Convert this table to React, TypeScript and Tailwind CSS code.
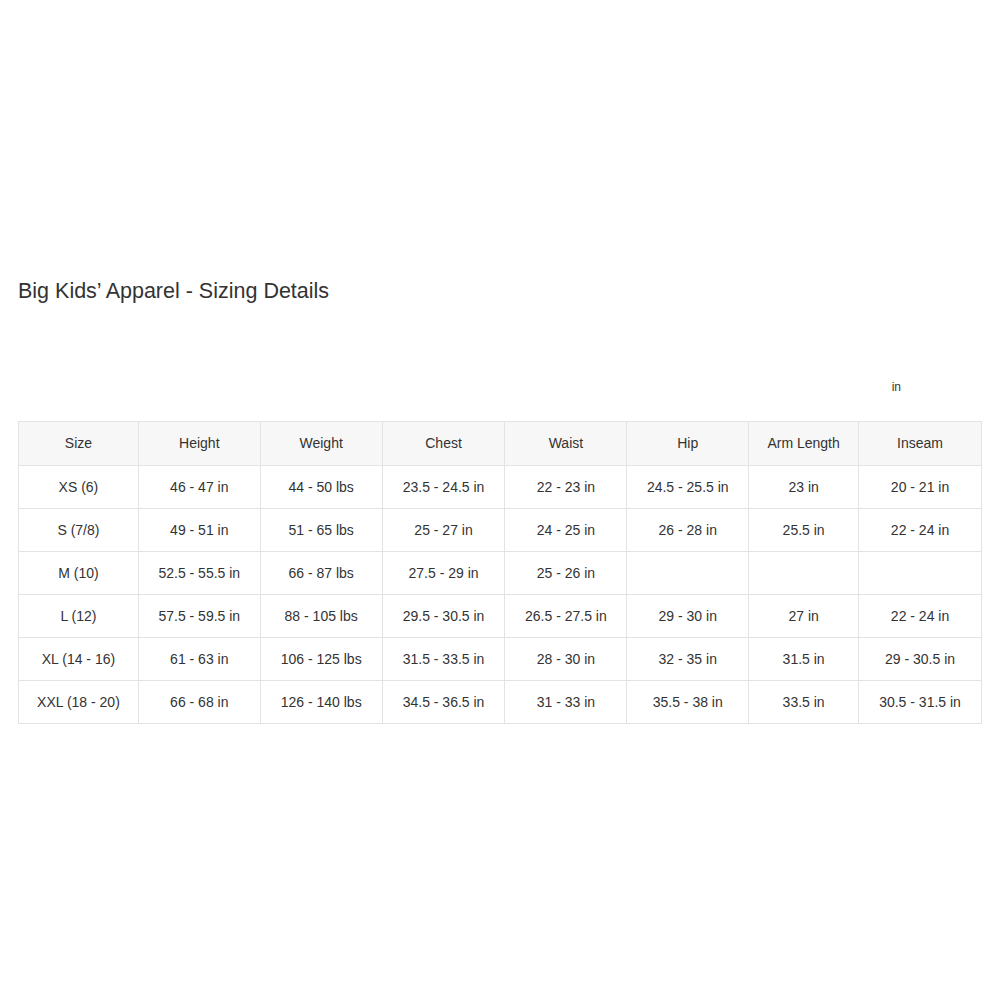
const COLS = ["Size", "Height", "Weight", "Chest", "Waist", "Hip", "Arm Length", "Inseam"];
const WIDTHS = ["w-[120px]", "w-[122px]", "w-[122px]", "w-[123px]", "w-[122px]", "w-[122px]", "w-[110px]", "w-[123px]"];

const ROWS: string[][] = [
  ["XS (6)", "46 - 47 in", "44 - 50 lbs", "23.5 - 24.5 in", "22 - 23 in", "24.5 - 25.5 in", "23 in", "20 - 21 in"],
  ["S (7/8)", "49 - 51 in", "51 - 65 lbs", "25 - 27 in", "24 - 25 in", "26 - 28 in", "25.5 in", "22 - 24 in"],
  ["M (10)", "52.5 - 55.5 in", "66 - 87 lbs", "27.5 - 29 in", "25 - 26 in", "", "", ""],
  ["L (12)", "57.5 - 59.5 in", "88 - 105 lbs", "29.5 - 30.5 in", "26.5 - 27.5 in", "29 - 30 in", "27 in", "22 - 24 in"],
  ["XL (14 - 16)", "61 - 63 in", "106 - 125 lbs", "31.5 - 33.5 in", "28 - 30 in", "32 - 35 in", "31.5 in", "29 - 30.5 in"],
  ["XXL (18 - 20)", "66 - 68 in", "126 - 140 lbs", "34.5 - 36.5 in", "31 - 33 in", "35.5 - 38 in", "33.5 in", "30.5 - 31.5 in"],
];

export default function App() {
  return (
    <div className="w-[1000px] h-[1000px] bg-white text-[#333] font-['Liberation_Sans',Arial,sans-serif]">
      <div className="pt-[277px] px-[18px]">
        <h1 className="text-[21.5px] leading-[28px] font-normal">Big Kids’ Apparel - Sizing Details</h1>
        <div className="mt-[74px] flex justify-end pr-[81px] text-[12px] leading-[16px]">in</div>
        <table className="mt-[26px] table-fixed border-collapse text-[14px] text-center">
          <thead>
            <tr className="bg-[#f7f7f7]">
              {COLS.map((c, i) => (
                <th key={c} className={`${WIDTHS[i]} h-[44px] border border-[#e3e3e3] font-normal p-0`}>
                  {c}
                </th>
              ))}
            </tr>
          </thead>
          <tbody>
            {ROWS.map((row) => (
              <tr key={row[0]}>
                {row.map((cell, i) => (
                  <td key={i} className="h-[43px] border border-[#e3e3e3] p-0">
                    {cell}
                  </td>
                ))}
              </tr>
            ))}
          </tbody>
        </table>
      </div>
    </div>
  );
}
